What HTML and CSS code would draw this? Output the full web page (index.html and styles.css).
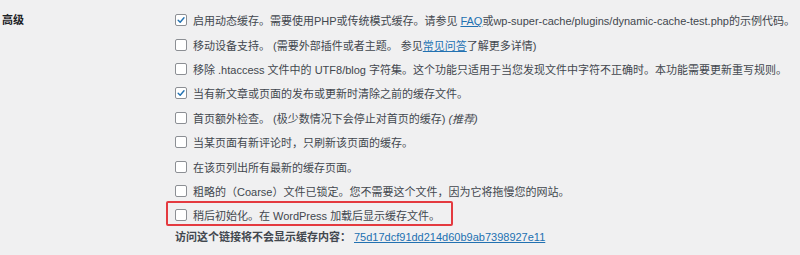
FILE: index.html
```html
<!DOCTYPE html>
<html lang="zh-CN">
<head>
<meta charset="utf-8">
<title>高级</title>
<link rel="stylesheet" href="styles.css">
</head>
<body>
<div class="form-row">
  <div class="th">高级</div>
  <div class="td">
    <label class="opt"><span class="cb checked"><svg viewBox="0 0 12 12" width="12" height="12"><path d="M2.6 6.2 L5 8.6 L9.6 3.2" fill="none" stroke="#2271b1" stroke-width="1.7" stroke-linecap="round" stroke-linejoin="round"/></svg></span><span>启用动态缓存。需要使用PHP或传统模式缓存。请参见 <a href="#">FAQ</a>或wp-super-cache/plugins/dynamic-cache-test.php的示例代码。</span></label>
    <label class="opt"><span class="cb"></span><span>移动设备支持。 (需要外部插件或者主题。 参见<a href="#">常见问答</a>了解更多详情)</span></label>
    <label class="opt"><span class="cb"></span><span>移除 .htaccess 文件中的 UTF8/blog 字符集。这个功能只适用于当您发现文件中字符不正确时。本功能需要更新重写规则。</span></label>
    <label class="opt"><span class="cb checked"><svg viewBox="0 0 12 12" width="12" height="12"><path d="M2.6 6.2 L5 8.6 L9.6 3.2" fill="none" stroke="#2271b1" stroke-width="1.7" stroke-linecap="round" stroke-linejoin="round"/></svg></span><span>当有新文章或页面的发布或更新时清除之前的缓存文件。</span></label>
    <label class="opt"><span class="cb"></span><span>首页额外检查。 (极少数情况下会停止对首页的缓存) <em>(推荐)</em></span></label>
    <label class="opt"><span class="cb"></span><span>当某页面有新评论时，只刷新该页面的缓存。</span></label>
    <label class="opt"><span class="cb"></span><span>在该页列出所有最新的缓存页面。</span></label>
    <label class="opt"><span class="cb"></span><span>粗略的（Coarse）文件已锁定。您不需要这个文件，因为它将拖慢您的网站。</span></label>
    <div class="highlight">
      <label class="opt"><span class="cb"></span><span>稍后初始化。在 WordPress 加载后显示缓存文件。</span></label>
      <div class="highlight-frame"></div>
    </div>
    <div class="secret"><strong>访问这个链接将不会显示缓存内容：</strong><a href="#">75d17dcf91dd214d60b9ab7398927e11</a></div>
  </div>
</div>
</body>
</html>
```

FILE: styles.css
```css
html, body {
  margin: 0;
  padding: 0;
  background: #f0f0f1;
}
body {
  font-family: "Liberation Sans", "Noto Sans CJK SC", sans-serif;
  font-size: 11px;
  color: #42474e;
  text-spacing-trim: space-all;
}
.form-row {
  display: flex;
  padding-top: 8px;
}
.th {
  flex: none;
  width: 173px;
  padding-left: 2px;
  font-weight: bold;
  color: #1d2327;
  height: 24.4px;
  line-height: 24.4px;
}
.td {
  display: flex;
  flex-direction: column;
  min-width: 0;
}
.opt {
  display: flex;
  align-items: center;
  height: 24.4px;
  gap: 6px;
  white-space: nowrap;
}
.opt:first-child {
  letter-spacing: -0.01px;
}
.cb {
  box-sizing: border-box;
  width: 12px;
  height: 12px;
  border: 1px solid #8c8f94;
  border-radius: 2px;
  background: #fff;
  display: flex;
  align-items: center;
  justify-content: center;
  flex: none;
}
.cb svg {
  display: block;
}
a {
  color: #2271b1;
  text-decoration: underline;
}
em {
  font-style: italic;
}
.highlight {
  position: relative;
}
.highlight-frame {
  position: absolute;
  left: -9px;
  top: -2px;
  width: 287px;
  height: 25px;
  box-sizing: border-box;
  border: 2px solid rgb(228, 58, 64);
  border-radius: 2px;
  pointer-events: none;
}
.secret {
  height: 18px;
  line-height: 18px;
  white-space: nowrap;
}
.secret strong {
  color: #42474e;
  margin-right: 3px;
}
```
